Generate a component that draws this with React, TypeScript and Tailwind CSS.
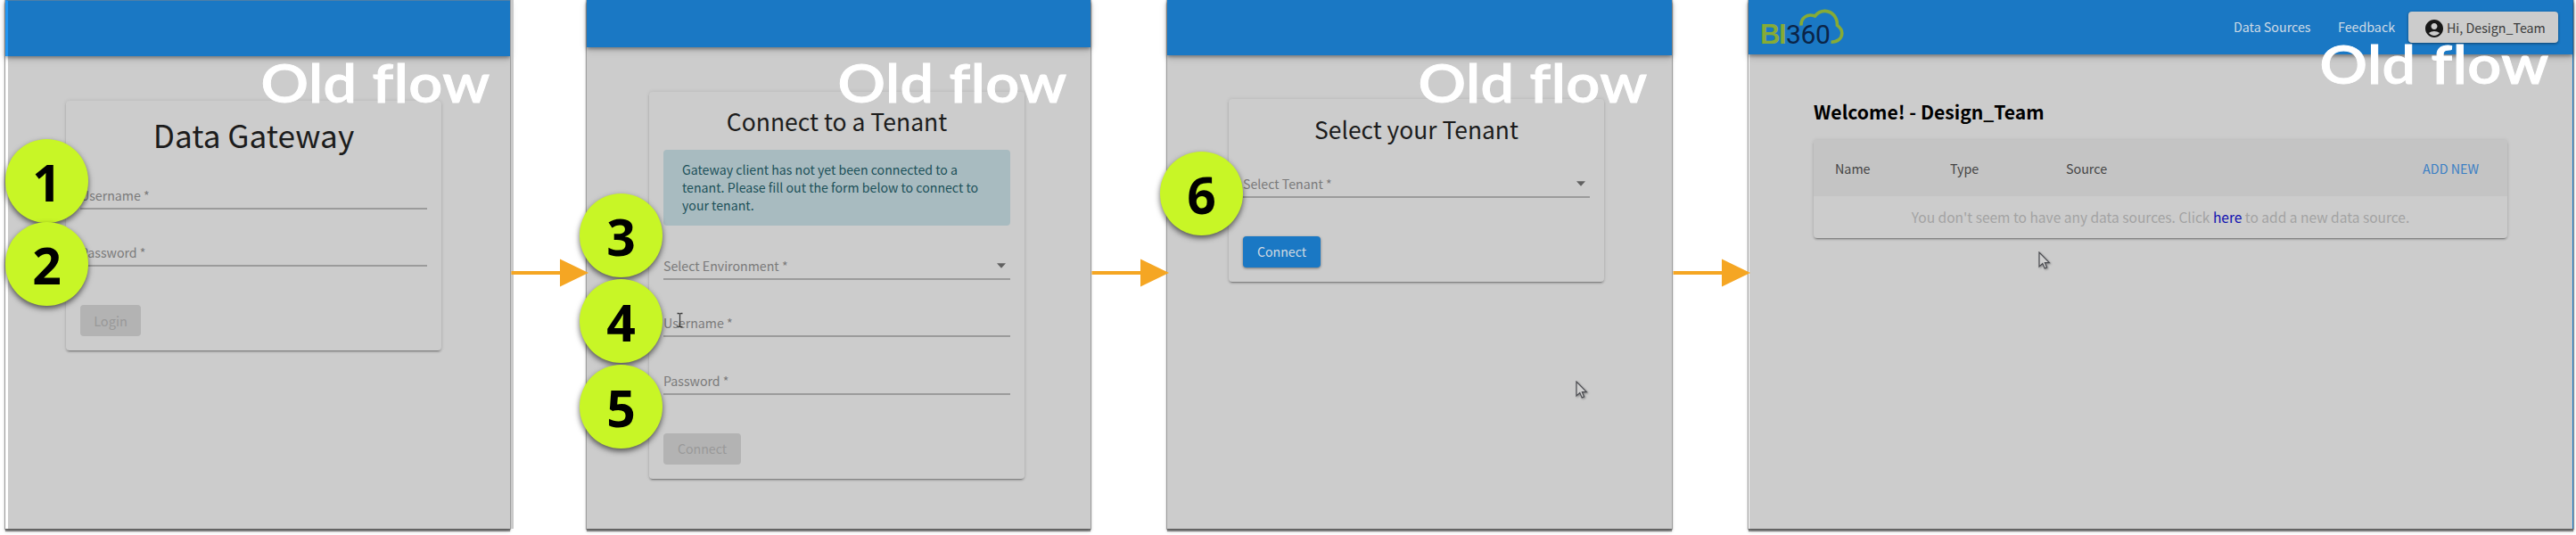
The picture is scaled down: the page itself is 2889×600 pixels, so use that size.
import type { ReactNode } from "react";
import { MdAccountCircle } from "react-icons/md";

const cardShadow =
  "shadow-[0_3px_1px_-2px_rgba(0,0,0,0.22),0_2px_2px_0_rgba(0,0,0,0.16),0_0_4px_0_rgba(0,0,0,0.12)]";
const panelShadow =
  "shadow-[0_3px_1px_0_rgba(0,0,0,0.42),0_3px_4px_0_rgba(0,0,0,0.2),0_0_1px_1px_rgba(0,0,0,0.28)]";
const headerShadow = "shadow-[0_2px_4px_0_rgba(0,0,0,0.35),0_3px_9px_0_rgba(0,0,0,0.14)]";

function FlowLabel({ place }: { place: string }) {
  return (
    <span
      className={`absolute z-20 origin-right scale-x-[1.11] whitespace-nowrap font-['Lato',sans-serif] text-[60px] font-semibold leading-[60px] tracking-[0.4px] text-white [-webkit-text-stroke:0.9px_white] ${place}`}
    >
      Old flow
    </span>
  );
}

function Step({ n, place }: { n: number; place: string }) {
  return (
    <div
      className={`absolute z-10 h-[94px] w-[93px] rounded-full bg-[#c8f626] pt-px text-center font-['Open_Sans',sans-serif] text-[57px] font-bold leading-[94px] text-black shadow-[0_3px_6px_0_rgba(0,0,0,0.6)] ${place}`}
    >
      {n}
    </div>
  );
}

function Arrow({ width }: { width: string }) {
  return (
    <div className={`relative z-10 flex h-[593px] shrink-0 items-start pt-[290px] ${width}`}>
      <svg className="block h-8 w-[88px] overflow-visible" viewBox="0 0 88 32" fill="#f5a623">
        <path d="M1.5 14H56V0.5L88 16L56 31.5V18H1.5Z" />
      </svg>
    </div>
  );
}

function Panel({ className, children }: { className: string; children: ReactNode }) {
  return (
    <section className={`relative flex h-[593px] shrink-0 flex-col bg-[#cccccc] ${panelShadow} ${className}`}>
      {children}
    </section>
  );
}

function Card({ className, children }: { className: string; children: ReactNode }) {
  return (
    <div className={`flex w-[421px] flex-col rounded-[4px] bg-[#cccccc] px-4 pb-4 ${cardShadow} ${className}`}>
      {children}
    </div>
  );
}

function Field({ label, select = false, className }: { label: string; select?: boolean; className: string }) {
  return (
    <div className={`flex h-[26px] items-start justify-between border-b-2 border-[#9b9b9b] ${className}`}>
      <span className="text-[14.2px] leading-5 text-[#7a7a7a]">{label}</span>
      {select && (
        <svg className="mr-[5px] mt-[7px] h-[6px] w-[10px]" viewBox="0 0 9 5" fill="#606060">
          <path d="M0 0H9L4.5 5Z" />
        </svg>
      )}
    </div>
  );
}

function Cursor({ place }: { place: string }) {
  return (
    <svg
      className={`absolute h-[20px] w-[14px] drop-shadow-[1px_1px_1px_rgba(0,0,0,0.35)] ${place}`}
      viewBox="0 0 14 20"
      fill="#d0d0d0"
      stroke="#4a4b50"
      strokeWidth="1.2"
    >
      <path d="M1 1V17L4.8 13.6L7.2 18.9L9.6 17.9L7.4 12.7H12.4Z" />
    </svg>
  );
}

function Logo() {
  return (
    <div className="relative flex h-[60px] w-[110px] items-start pl-[13px] pt-[18px]">
      <span className="w-[29px] font-['Liberation_Sans',sans-serif] text-[31px] font-bold leading-[42px] tracking-[-1.5px] text-[#86ab36]">
        BI
      </span>
      <span className="font-['Roboto',sans-serif] text-[30px] leading-[42px] tracking-[-0.3px] text-[#0b2447]">360</span>
      <svg
        className="absolute left-0 top-0 h-[60px] w-[110px]"
        viewBox="0 0 110 60"
        fill="none"
        stroke="#86ab36"
        strokeWidth="3.6"
      >
        <path d="M59 28.7C58.6 20 66 14.8 74.5 18C78 13.8 82 12.2 86 12.4C94 12.9 99.8 19.5 99.4 28.4C103 31 104.8 33.8 104.8 37.3C104.6 43 100 47.3 92.5 47.3" />
      </svg>
    </div>
  );
}

export default function App() {
  return (
    <main className="flex h-[600px] w-[2889px] items-start overflow-hidden bg-white pl-[6px] font-['Noto_Sans_CJK_JP','Noto_Sans',sans-serif]">
      <Panel className="w-[566px] border-l-[3px] border-white">
        <div className="absolute left-[563px] top-0 h-[593px] w-1 border-l border-[#9d9d9d] bg-[#c9c9c9]" />
        <header
          className={`-ml-[3px] h-[63px] shrink-0 border-l-[3px] border-t border-l-[#2196f3] border-t-[#4d7fa8] bg-[#1a78c4] ${headerShadow}`}
        />
        <Card className="ml-[65px] mt-[50px]">
          <h1 className="pt-[18px] text-center text-[35.2px] leading-10 text-[#1c1c1c]">Data Gateway</h1>
          <Field label="Username *" className="mt-[38px]" />
          <Field label="Password *" className="mt-[38px]" />
          <button className="mt-[43px] h-[35px] w-[68px] rounded-[4px] bg-[#b3b3b3] text-[14.6px] leading-[35px] text-[#999999]">
            Login
          </button>
        </Card>
        <Step n={1} place="-left-[3px] top-[156px]" />
        <Step n={2} place="-left-[3px] top-[249px]" />
        <FlowLabel place="right-[22px] top-[62px]" />
      </Panel>

      <Arrow width="w-[86px]" />

      <Panel className="w-[565px]">
        <header className={`h-[53px] shrink-0 bg-[#1a78c4] ${headerShadow}`} />
        <Card className="ml-[70px] mt-[50px]">
          <h1 className="pt-[17px] text-center text-[26.5px] leading-8 text-[#1c1c1c]">Connect to a Tenant</h1>
          <p className="mt-4 h-[85px] whitespace-nowrap rounded-[4px] bg-[#a8bbc0] pl-[21px] pt-[13px] text-[14.15px] leading-[19.8px] text-[#1b5058]">
            Gateway client has not yet been connected to a
            <br />
            tenant. Please fill out the form below to connect to
            <br />
            your tenant.
          </p>
          <Field label="Select Environment *" select className="mt-[35px]" />
          <Field label="Username *" className="mt-[38px]" />
          <Field label="Password *" className="mt-[39px]" />
          <button className="mt-[43px] h-[35px] w-[87px] rounded-[4px] bg-[#b3b3b3] text-[14.2px] leading-[35px] text-[#999999]">
            Connect
          </button>
        </Card>
        <svg
          className="absolute left-[101px] top-[350px] h-[18px] w-[7px]"
          viewBox="0 0 7 18"
          fill="none"
          stroke="#3c3c3c"
          strokeWidth="1.3"
        >
          <path d="M0.5 1.5H2.3L3.5 2.3L4.7 1.5H6.5M3.5 2.3V15.7M0.5 16.5H2.3L3.5 15.7L4.7 16.5H6.5" />
        </svg>
        <Step n={3} place="-left-[8px] top-[217px]" />
        <Step n={4} place="-left-[8px] top-[313px]" />
        <Step n={5} place="-left-[8px] top-[409px]" />
        <FlowLabel place="right-[26px] top-[62px]" />
      </Panel>

      <Arrow width="w-[86px]" />

      <Panel className="w-[566px]">
        <header className={`h-[62px] shrink-0 bg-[#1a78c4] ${headerShadow}`} />
        <Card className="ml-[69px] mt-[49px]">
          <h1 className="pt-[18px] text-center text-[26.4px] leading-8 text-[#1c1c1c]">Select your Tenant</h1>
          <Field label="Select Tenant *" select className="mt-[35px]" />
          <button className="mt-[43px] h-[35px] w-[87px] rounded-[4px] bg-[#1a78c4] text-[14.2px] leading-[35px] text-[#d3dbe2] shadow-[0_1px_3px_0_rgba(0,0,0,0.45)]">
            Connect
          </button>
        </Card>
        <Step n={6} place="-left-[8px] top-[170px]" />
        <Cursor place="left-[458px] top-[427px]" />
        <FlowLabel place="right-[27px] top-[62px]" />
      </Panel>

      <Arrow width="w-[86px]" />

      <Panel className="w-[925px] border-l border-r border-l-white border-r-[#1a78c4]">
        <header
          className={`-ml-px flex h-[61px] shrink-0 items-start justify-between bg-[#1a78c4] pr-4 text-[14.25px] ${headerShadow}`}
        >
          <Logo />
          <nav className="flex h-[60px] items-center whitespace-nowrap text-[#cfdbe6]">
            <a className="w-[117px] leading-[60px]">Data Sources</a>
            <a className="w-[79px] leading-[60px]">Feedback</a>
            <a className="flex h-[35px] w-[168px] items-center gap-[2px] rounded-[4px] bg-[#cccccc] pl-[17px] leading-[35px] text-[#3a3a3a] shadow-[0_1px_3px_0_rgba(0,0,0,0.45)]">
              <MdAccountCircle className="mt-[4px] size-6 shrink-0 text-[#171717]" />
              <span>Hi, Design_Team</span>
            </a>
          </nav>
        </header>
        <h2 className="ml-[72px] mt-[50px] text-[21.15px] font-bold leading-7 text-black">Welcome! - Design_Team</h2>
        <div className={`ml-[72px] mt-[18px] w-[778px] rounded-[4px] bg-[#cccccc] ${cardShadow}`}>
          <div className="flex h-[63px] bg-[#c4c4c4] pl-6 pr-8 text-[14.3px] leading-[63px] text-[#444444]">
            <span className="w-[129px]">Name</span>
            <span className="w-[130px]">Type</span>
            <span className="flex-1">Source</span>
            <span className="text-[#3b7fc4]">ADD NEW</span>
          </div>
          <p className="h-[47px] text-center text-[15.53px] leading-[47px] text-[#a3a3a3]">
            You don't seem to have any data sources. Click <a className="text-[#1010b0]">here</a> to add a new data
            source.
          </p>
        </div>
        <Cursor place="left-[324px] top-[282px]" />
        <FlowLabel place="right-[26px] top-[41px]" />
      </Panel>
    </main>
  );
}
